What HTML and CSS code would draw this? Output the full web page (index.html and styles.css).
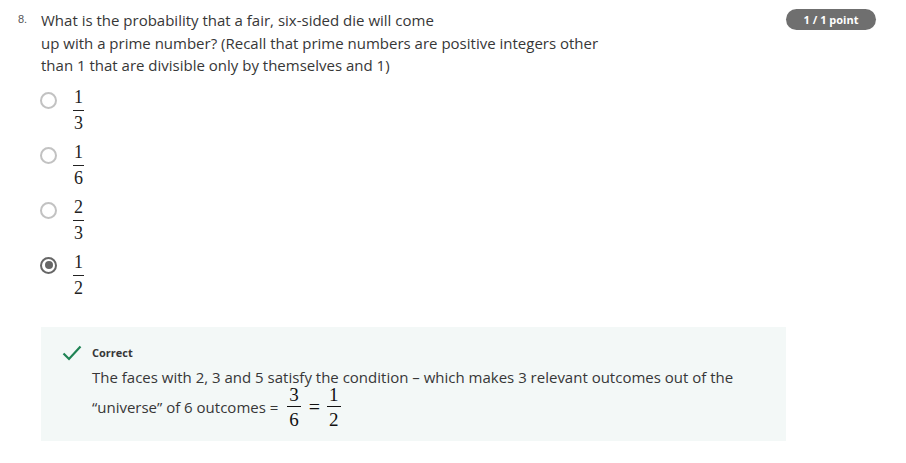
FILE: index.html
```html
<!DOCTYPE html>
<html>
<head>
<meta charset="utf-8">
<link rel="stylesheet" href="styles.css">
</head>
<body>
<div class="question">
  <div class="qhead">
    <div class="qnum">8.</div>
    <div class="qtext">What is the probability that a fair, six-sided die will come<br>up with a prime number? (Recall that prime numbers are positive integers other<br>than 1 that are divisible only by themselves and 1)</div>
    <div class="badge">1 / 1 point</div>
  </div>
  <div class="options">
    <div class="option"><span class="radio"></span><span class="frac"><span class="num">1</span><span class="den">3</span></span></div>
    <div class="option"><span class="radio"></span><span class="frac"><span class="num">1</span><span class="den">6</span></span></div>
    <div class="option"><span class="radio"></span><span class="frac"><span class="num">2</span><span class="den">3</span></span></div>
    <div class="option"><span class="radio checked"></span><span class="frac"><span class="num">1</span><span class="den">2</span></span></div>
  </div>
  <div class="feedback">
    <svg class="check" width="20" height="16" viewBox="0 0 20 16"><path d="M1.5 8.5 L7 14 L18.5 1.5" fill="none" stroke="#1f8354" stroke-width="2.2"/></svg>
    <div class="fbody">
      <div class="fhead">Correct</div>
      <div class="ftext line1">The faces with 2, 3 and 5 satisfy the condition – which makes 3 relevant outcomes out of the</div>
      <div class="ftext line2"><span>“universe” of 6 outcomes =</span><span class="frac big"><span class="num">3</span><span class="den">6</span></span><span class="eq">=</span><span class="frac big"><span class="num">1</span><span class="den">2</span></span></div>
    </div>
  </div>
</div>
</body>
</html>
```
FILE: styles.css
```css
* { box-sizing: border-box; }
body {
  margin: 0;
  background: #fff;
  font-family: "Open Sans", "Liberation Sans", sans-serif;
  color: #373737;
}
.question {
  padding: 9px 30px 0 18px;
  width: 906px;
}
.qhead {
  display: flex;
  align-items: flex-start;
}
.qnum {
  width: 23px;
  font-family: "Liberation Sans", Arial, sans-serif;
  font-size: 11px;
  line-height: 20px;
  color: #555;
}
.qtext {
  flex: 1;
  font-size: 15px;
  line-height: 22.5px;
}
.badge {
  background: #6f6f6f;
  color: #fff;
  font-size: 11px;
  font-weight: 700;
  border-radius: 11px;
  height: 21px;
  line-height: 21px;
  width: 90px;
  text-align: center;
}
.options {
  padding-left: 22px;
  padding-top: 11px;
  display: flex;
  flex-direction: column;
  gap: 7px;
}
.option {
  display: flex;
  align-items: flex-start;
  height: 48px;
}
.radio {
  width: 17px;
  height: 17px;
  margin-top: 4px;
  border: 2px solid #c2c2c2;
  border-radius: 50%;
  margin-right: 16px;
  position: relative;
  flex: none;
}
.radio.checked {
  border-color: #666;
}
.radio.checked::after {
  content: "";
  position: absolute;
  left: 2.5px;
  top: 2.5px;
  width: 8px;
  height: 8px;
  border-radius: 50%;
  background: #666;
}
.frac {
  display: inline-flex;
  flex-direction: column;
  align-items: center;
  font-family: "Liberation Serif", "DejaVu Serif", serif;
  font-size: 18px;
  line-height: 19px;
  color: #222;
}
.frac .num {
  border-bottom: 1.5px solid #222;
  padding: 0 1px 3px;
}
.frac .den {
  padding-top: 3px;
}
.feedback {
  margin: 26px 90px 0 23px;
  background: #f3f8f7;
  height: 114px;
  display: flex;
  padding: 18px 0 0 21px;
}
.check {
  flex: none;
  margin-right: 10px;
}
.fhead {
  font-size: 11px;
  font-weight: 700;
  line-height: 16px;
}
.ftext {
  font-size: 15px;
}
.ftext.line1 {
  line-height: 18px;
  margin-top: 7px;
}
.ftext.line2 {
  line-height: 22px;
  margin-top: 0;
  display: flex;
  align-items: center;
}
.frac.big {
  margin-left: 9px;
  font-size: 19px;
  line-height: 17px;
  color: #111;
}
.frac.big .num { padding: 0 2px 3px; border-color: #111; }
.frac.big .den { padding-top: 4px; }
.eq {
  font-family: "Liberation Serif", "DejaVu Serif", serif;
  font-size: 20px;
  line-height: 20px;
  margin: 0 7px 0 8px;
  color: #111;
}
.frac.big + .eq + .frac.big { margin-left: 0; }
```
